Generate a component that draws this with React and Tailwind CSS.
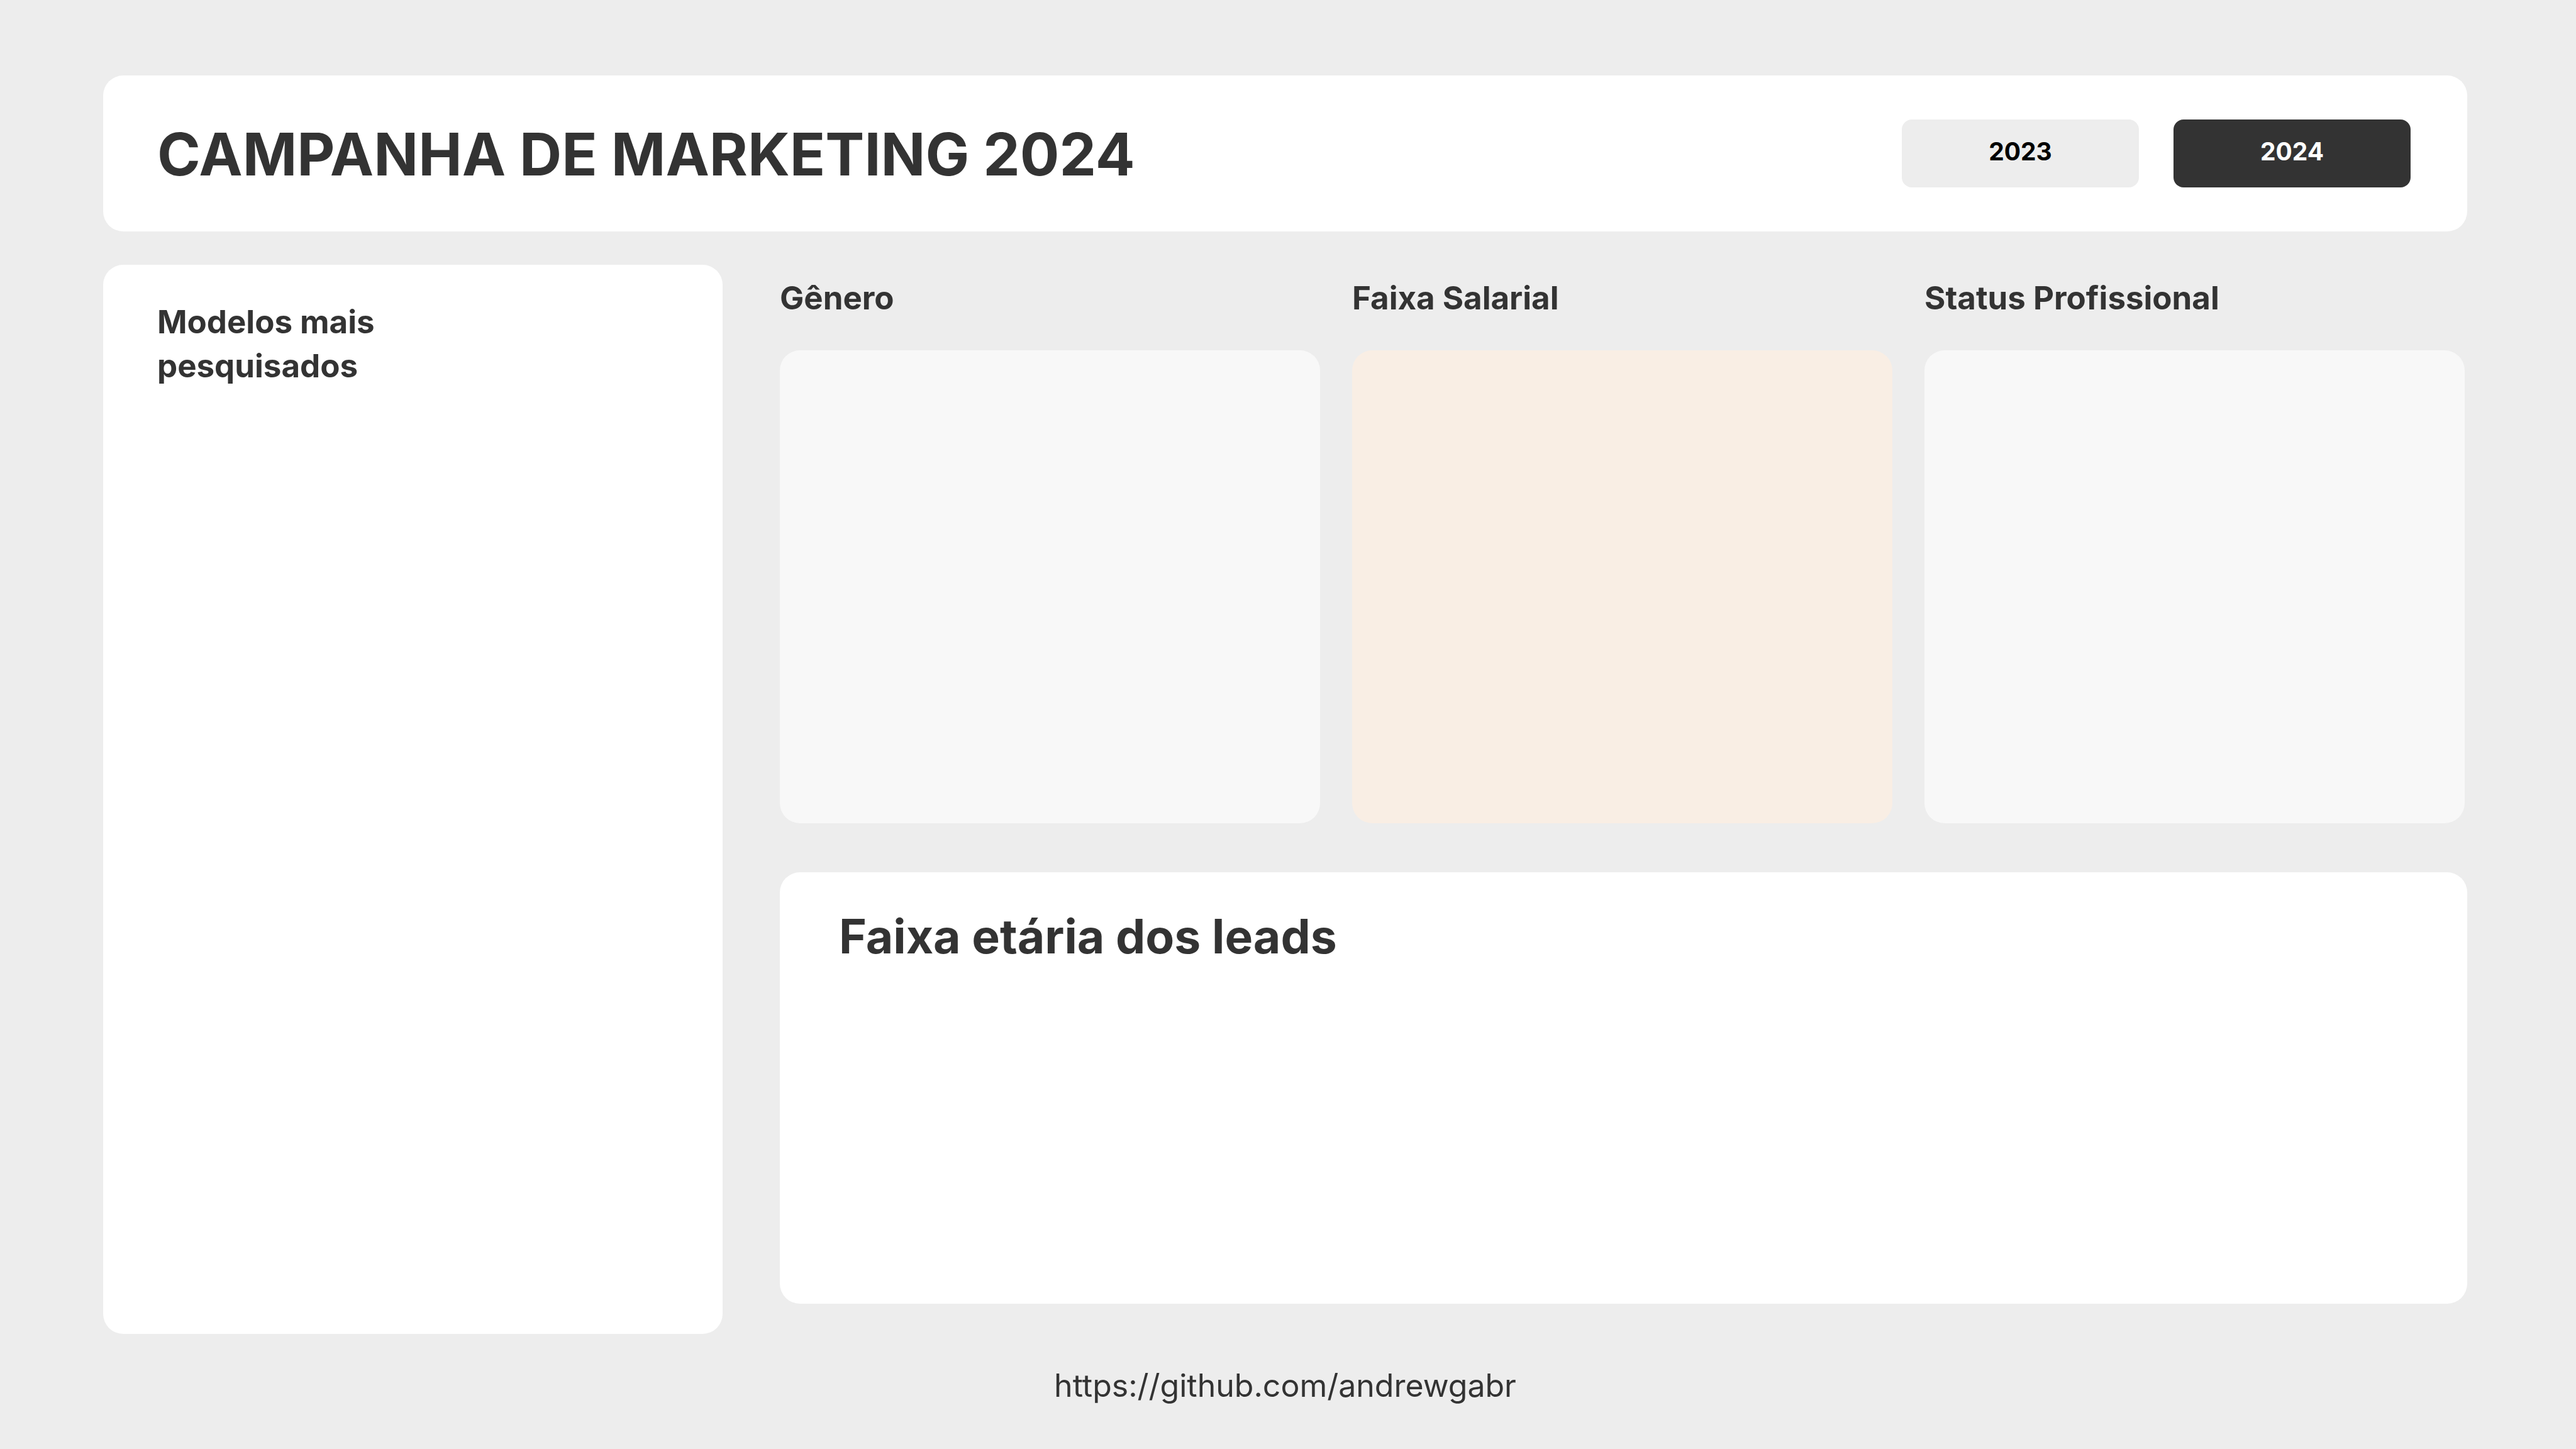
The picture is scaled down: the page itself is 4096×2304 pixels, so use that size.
import { useState } from "react";

const segments = [
  { title: "Gênero", tone: "bg-[#f8f8f8]" },
  { title: "Faixa Salarial", tone: "bg-[#f9eee4]" },
  { title: "Status Profissional", tone: "bg-[#f8f8f8]" },
];

const years = ["2023", "2024"];

function YearButton({ year, active, onSelect }) {
  return (
    <button
      type="button"
      aria-pressed={active}
      onClick={onSelect}
      className={
        "flex h-[108px] w-[377px] items-center justify-center rounded-2xl pb-1.5 text-[39px] leading-[48px] font-bold " +
        (active ? "bg-[#333333] text-white" : "bg-[#ededed] text-black")
      }
    >
      {year}
    </button>
  );
}

export default function App() {
  const [selected, setSelected] = useState("2024");

  return (
    <div className="flex min-h-screen flex-col bg-[#ededed] pt-[120px] pr-[173px] pl-[164px] font-['Inter','Liberation_Sans',sans-serif] text-[#333333]">
      <header className="flex min-h-[248px] items-center justify-between rounded-4xl bg-white pr-[90px] pl-[86px]">
        <h1 className="pt-0.5 text-[93px] leading-[112px] font-bold">CAMPANHA DE MARKETING 2024</h1>
        <nav aria-label="Ano" className="flex gap-[55px]">
          {years.map((year) => (
            <YearButton key={year} year={year} active={year === selected} onSelect={() => setSelected(year)} />
          ))}
        </nav>
      </header>

      <main className="mt-[53px] grid flex-1 grid-cols-[985fr_2683fr] gap-x-[91px]">
        <section className="rounded-4xl bg-white px-[86px] pt-[56px]">
          <h2 className="max-w-[420px] text-[51px] leading-[70px] font-bold">Modelos mais pesquisados</h2>
        </section>

        <div className="flex flex-col gap-[78px] pb-12">
          <div className="grid flex-[888_1_0%] grid-cols-3 gap-x-[51px] pr-1">
            {segments.map(({ title, tone }) => (
              <section key={title} className="flex flex-col">
                <h2 className="pt-[18px] pb-12 text-[51px] leading-[70px] font-bold">{title}</h2>
                <div className={"flex-1 rounded-4xl " + tone} />
              </section>
            ))}
          </div>
          <section className="flex-[686_1_0%] rounded-4xl bg-white px-[94px]">
            <h2 className="pt-[54px] text-[75px] leading-[96px] font-bold">Faixa etária dos leads</h2>
          </section>
        </div>
      </main>

      <footer className="flex h-[183px] justify-center pt-[50px]">
        <a href="https://github.com/andrewgabr" className="text-[50px] leading-[64px]">
          https://github.com/andrewgabr
        </a>
      </footer>
    </div>
  );
}
